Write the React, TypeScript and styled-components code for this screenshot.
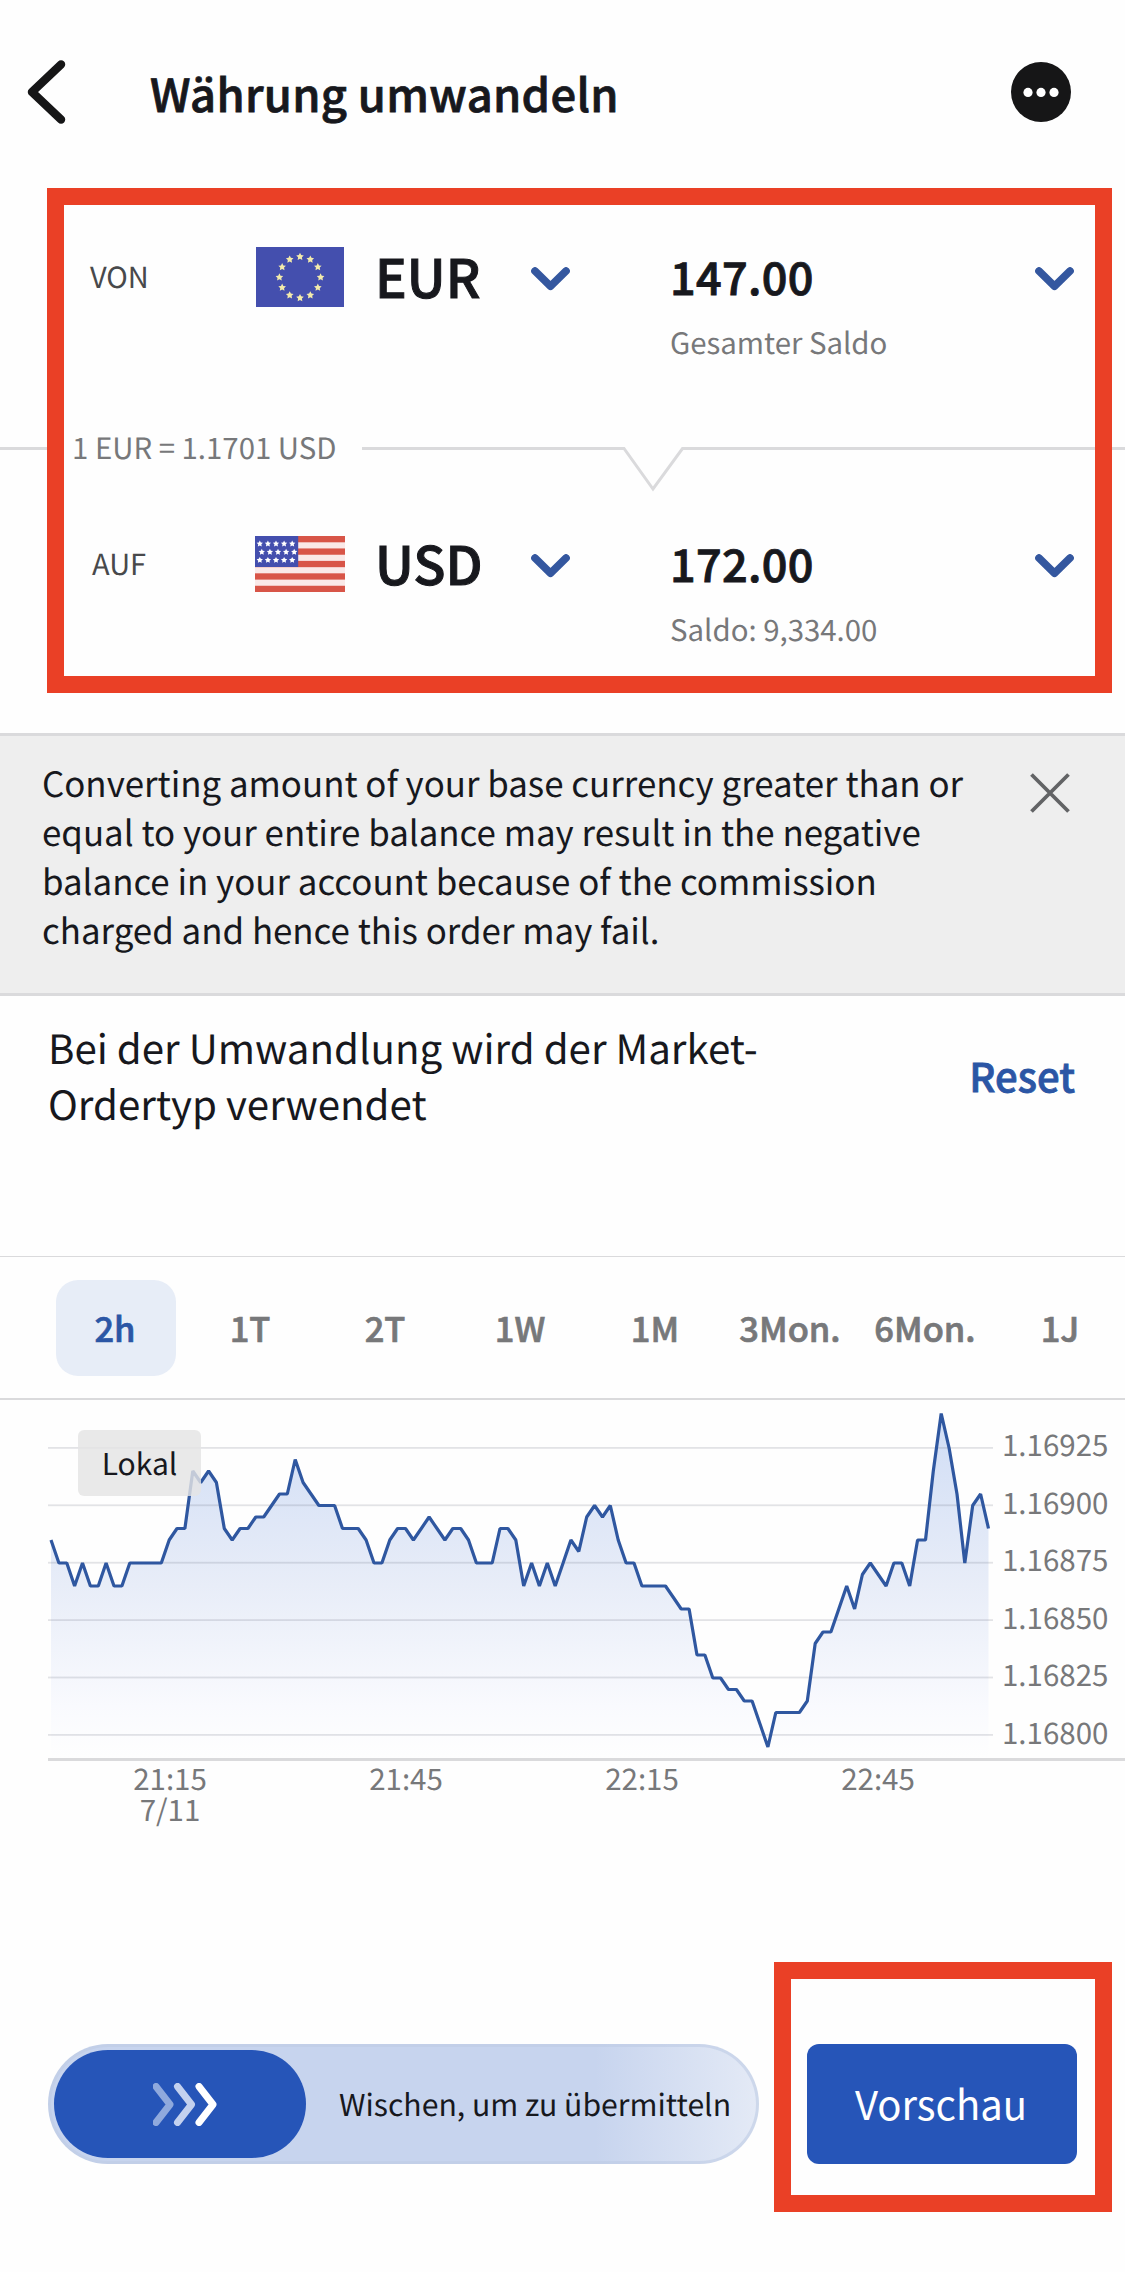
import React from 'react';
import styled, { createGlobalStyle } from 'styled-components';

const ink = '#17181d';
const muted = '#77787a';
const blue = '#2b56a5';
const line = '#dadadc';

const GlobalStyle = createGlobalStyle`
  *, *::before, *::after { box-sizing: border-box; }
  body {
    margin: 0;
    background: #fefefe;
    color: ${ink};
    font-family: "Noto Sans CJK SC", "Noto Sans", sans-serif;
    font-kerning: normal;
    text-rendering: geometricPrecision;
  }
  button { font: inherit; color: inherit; background: none; border: 0; padding: 0; }
  p, h1 { margin: 0; font-weight: 400; }
  svg { display: block; flex: none; }
`;

const Screen = styled.main`
  position: relative;
  width: 1125px;
  height: 2272px;
  overflow: hidden;
  display: flex;
  flex-direction: column;
  white-space: nowrap;
`;

const Header = styled.header`
  height: 187px;
  padding: 0 54px 3px 27px;
  display: flex;
  align-items: center;
`;

const Title = styled.h1`
  flex: 1;
  padding: 2px 0 0 84px;
  font-size: 45.3px;
  line-height: 64px;
  font-weight: 500;
  letter-spacing: 0.33px;
  -webkit-text-stroke: 0.8px currentColor;
`;

const Converter = styled.section`
  height: 546px;
  padding-top: 56px;
`;

const CurrencyRow = styled.div`
  display: grid;
  grid-template-columns: 165px 120px 156px 139px 365px auto;
  padding-left: 90px;
  height: 118px;
`;

const Cell = styled.div<{ $drop?: number }>`
  height: 64px;
  display: flex;
  align-items: center;
  padding-top: ${(p) => (p.$drop ?? 0) * 2}px;
`;

const SideLabel = styled.span<{ $indent: number }>`
  padding-left: ${(p) => p.$indent}px;
  font-size: 29px;
  color: #48494b;
`;

const Code = styled.span`
  font-size: 53px;
  line-height: 64px;
  font-weight: 500;
  -webkit-text-stroke: 1px currentColor;
`;

const Amount = styled.div`
  padding-top: 1px;
  font-size: 45px;
  line-height: 64px;
  font-weight: 500;
  letter-spacing: 0.35px;
  -webkit-text-stroke: 0.9px currentColor;
`;

const Balance = styled.div`
  margin-top: 14px;
  font-size: 29.4px;
  line-height: 40px;
  color: ${muted};
`;

const RateDivider = styled.div`
  height: 169px;
  padding-top: 65px;
  display: flex;
`;

const Stub = styled.div`
  width: 60px;
  height: 3px;
  margin: 21px 12px 0 0;
  background: ${line};
`;

const Rate = styled.div`
  width: 290px;
  padding-top: 1px;
  font-size: 29.4px;
  line-height: 41px;
  color: ${muted};
`;

const Banner = styled.section`
  height: 263px;
  padding: 23px 55px 0 42px;
  display: flex;
  justify-content: space-between;
  background: #eeeeee;
  border-top: 3px solid ${line};
  border-bottom: 3px solid ${line};
`;

const BannerText = styled.p`
  font-size: 34.87px;
  line-height: 49px;
`;

const CloseButton = styled.button`
  width: 40px;
  height: 40px;
  margin-top: 14px;
`;

const OrderInfo = styled.section`
  height: 260px;
  padding: 23px 50px 0 48px;
  display: flex;
  justify-content: space-between;
`;

const InfoText = styled.p`
  font-size: 40.25px;
  line-height: 56px;
`;

const ResetButton = styled.button`
  height: 112px;
  font-size: 40px;
  font-weight: 500;
  color: ${blue};
  -webkit-text-stroke: 0.8px currentColor;
`;

const Tabs = styled.nav`
  height: 144px;
  padding: 23px 0 0 56px;
  display: flex;
  gap: 15px;
  border-top: 1px solid ${line};
  border-bottom: 2px solid ${line};
`;

const Tab = styled.button<{ $active: boolean }>`
  flex: none;
  width: 120px;
  height: 96px;
  border-radius: 22px;
  padding: 0 2px 2px 0;
  display: flex;
  align-items: center;
  justify-content: center;
  font-size: 34.5px;
  font-weight: 500;
  -webkit-text-stroke: 0.7px currentColor;
  color: ${(p) => (p.$active ? blue : muted)};
  background: ${(p) => (p.$active ? '#e7edf7' : 'transparent')};
`;

const Chart = styled.section`
  position: relative;
  margin-left: 48px;
  height: 361px;
  display: flex;
  border-bottom: 3px solid ${line};
`;

const PriceAxis = styled.div`
  padding: 16px 0 0 9px;
  font-size: 29.5px;
  line-height: 57.5px;
  color: ${muted};
`;

const LocalBadge = styled.div`
  position: absolute;
  left: 30px;
  top: 30px;
  width: 123px;
  height: 66px;
  border-radius: 6px;
  padding-bottom: 3px;
  display: flex;
  align-items: center;
  justify-content: center;
  background: rgba(228, 228, 228, 0.82);
  font-size: 30px;
`;

const TimeAxis = styled.div`
  height: 283px;
  padding: 2px 0 0 52px;
  display: flex;
  font-size: 29.5px;
  line-height: 30.5px;
  color: ${muted};
`;

const Tick = styled.div`
  width: 236px;
  text-align: center;
`;

const Actions = styled.footer`
  padding: 0 48px;
  display: flex;
  justify-content: space-between;
`;

const SwipeTrack = styled.div`
  width: 711px;
  height: 120px;
  border: 3px solid rgba(190, 203, 228, 0.6);
  border-radius: 60px;
  padding: 3px;
  display: flex;
  align-items: center;
  background: linear-gradient(90deg, #c7d4ee 0%, #c7d4ee 77%, #e4eaf6 100%) border-box;
`;

const Knob = styled.div`
  flex: none;
  width: 252px;
  height: 108px;
  margin-right: 33px;
  border-radius: 54px;
  display: flex;
  align-items: center;
  justify-content: center;
  padding-left: 11px;
  background: #2655b8;
`;

const SwipeText = styled.span`
  padding-bottom: 2px;
  font-size: 30.2px;
`;

const PreviewButton = styled.button`
  width: 270px;
  height: 120px;
  padding: 0 2px 2px 0;
  border-radius: 12px;
  background: #2655b8;
  color: #fff;
  font-size: 40px;
`;

const Highlight = styled.div<{ $x: number; $y: number; $w: number; $h: number }>`
  position: absolute;
  left: ${(p) => p.$x}px;
  top: ${(p) => p.$y}px;
  width: ${(p) => p.$w}px;
  height: ${(p) => p.$h}px;
  border: 17px solid #ea4026;
  pointer-events: none;
`;

const Caret = () => (
  <svg width="39" height="24" viewBox="0 0 39 24">
    <path d="M4 4 L19.5 19.3 L35 4" fill="none" stroke="#34579f" strokeWidth="7.6" strokeLinecap="round" strokeLinejoin="round" />
  </svg>
);

const starPoints = (cx: number, cy: number, r: number) =>
  Array.from({ length: 10 }, (_, i) => {
    const a = (Math.PI / 5) * i - Math.PI / 2;
    const q = i % 2 ? r * 0.5 : r;
    return `${(cx + q * Math.cos(a)).toFixed(2)},${(cy + q * Math.sin(a)).toFixed(2)}`;
  }).join(' ');

const EuFlag = () => (
  <svg width="89" height="60" viewBox="-1 0 89 60">
    <rect width="88" height="60" fill="#444fae" />
    {Array.from({ length: 12 }, (_, i) => {
      const a = (Math.PI / 6) * i;
      return <polygon key={i} points={starPoints(44 + 20.6 * Math.sin(a), 30.3 - 20.6 * Math.cos(a), 4)} fill="#f3ebab" />;
    })}
  </svg>
);

const UsFlag = () => (
  <svg width="90" height="56" viewBox="0 0 90 56">
    <rect width="90" height="56" fill="#fae9e8" />
    {[0, 1, 2, 3, 4].map((i) => (
      <rect key={i} y={i * 12.44} width="90" height="6.3" fill="#d85548" />
    ))}
    <rect width="43.2" height="31" fill="#444fae" />
    {[0, 1, 2].map((r) =>
      [0, 1, 2, 3, 4].map((c) => (
        <polygon key={`${r}${c}`} points={starPoints(4.8 + c * 8.1 + (r === 1 ? 2 : 0), 7.8 + r * 8.2, 3.3)} fill="#fff" />
      )),
    )}
  </svg>
);

// Steps of 0.00005 below 1.16925, one per minute.
const levels = [
  8, 10, 10, 12, 10, 12, 12, 10, 12, 12, 10, 10, 10, 10, 10, 8, 7, 7, 2, 3, 2, 3, 7, 8, 7, 7, 6, 6, 5, 4, 4, 1, 3, 4, 5, 5, 5, 7, 7, 7,
  8, 10, 10, 8, 7, 7, 8, 7, 6, 7, 8, 7, 7, 8, 10, 10, 10, 7, 7, 8, 12, 10, 12, 10, 12, 10, 8, 9, 6, 5, 6, 5, 8, 10, 10, 12, 12, 12, 12,
  13, 14, 14, 18, 18, 20, 20, 21, 21, 22, 22, 24, 26, 23, 23, 23, 23, 22, 17, 16, 16, 14, 12, 14, 11, 10, 11, 12, 10, 10, 12, 8, 8, 2,
  -3, 0, 4, 10, 5, 4, 7,
];

const PricePlot = () => {
  const pts = levels.map((k, i) => `${(3 + i * 7.878).toFixed(1)},${(48 + k * 11.5).toFixed(1)}`);
  return (
    <svg width="945" height="358" viewBox="0 0 945 358">
      <defs>
        <linearGradient id="fade" gradientUnits="userSpaceOnUse" x1="0" y1="13" x2="0" y2="358">
          <stop offset="0" stopColor="#d0ddf5" />
          <stop offset="0.5" stopColor="#e8edf8" />
          <stop offset="0.85" stopColor="#f9fafe" />
          <stop offset="1" stopColor="#fefefe" />
        </linearGradient>
      </defs>
      <polygon points={`3,358 ${pts.join(' ')} 940.5,358`} fill="url(#fade)" />
      {[0, 1, 2, 3, 4, 5].map((i) => (
        <rect key={i} y={47 + i * 57.4} width="945" height="1.8" fill="#5a6070" fillOpacity="0.17" />
      ))}
      <polyline points={pts.join(' ')} fill="none" stroke="#2f57a0" strokeWidth="3.2" strokeLinejoin="bevel" />
    </svg>
  );
};

const rows = [
  { label: 'VON', indent: 0, flag: <EuFlag />, code: 'EUR', amount: '147.00', balance: 'Gesamter Saldo', drop: 4 },
  { label: 'AUF', indent: 2, flag: <UsFlag />, code: 'USD', amount: '172.00', balance: 'Saldo: 9,334.00', drop: 3.5 },
];

const Row = ({ r }: { r: (typeof rows)[number] }) => (
  <CurrencyRow>
    <Cell $drop={1}><SideLabel $indent={r.indent}>{r.label}</SideLabel></Cell>
    <Cell $drop={2}>{r.flag}</Cell>
    <Cell $drop={1}><Code>{r.code}</Code></Cell>
    <Cell $drop={r.drop}><Caret /></Cell>
    <div>
      <Amount>{r.amount}</Amount>
      <Balance>{r.balance}</Balance>
    </div>
    <Cell $drop={r.drop}><Caret /></Cell>
  </CurrencyRow>
);

const periods = ['2h', '1T', '2T', '1W', '1M', '3Mon.', '6Mon.', '1J'];
const prices = ['1.16925', '1.16900', '1.16875', '1.16850', '1.16825', '1.16800'];

export default function App() {
  return (
    <Screen>
      <GlobalStyle />
      <Header>
        <svg width="39" height="64" viewBox="0 0 39 64">
          <path d="M34 4.5 L5 32 L34 59.5" fill="none" stroke="#161617" strokeWidth="8.5" strokeLinecap="round" strokeLinejoin="round" />
        </svg>
        <Title>Währung umwandeln</Title>
        <svg width="60" height="60" viewBox="0 0 60 60">
          <circle cx="30" cy="30" r="30" fill="#161617" />
          {[17, 30, 43].map((x) => <circle key={x} cx={x} cy="30.4" r="4.6" fill="#fff" />)}
        </svg>
      </Header>

      <Converter>
        <Row r={rows[0]} />
        <RateDivider>
          <Stub />
          <Rate>1 EUR = 1.1701 USD</Rate>
          <svg width="763" height="68" viewBox="0 0 763 68">
            <path d="M0 22.5 H262 L291 63 L320.5 22.5 H763" fill="none" stroke={line} strokeWidth="3" />
          </svg>
        </RateDivider>
        <Row r={rows[1]} />
      </Converter>

      <Banner>
        <BannerText>
          Converting amount of your base currency greater than or<br />
          equal to your entire balance may result in the negative<br />
          balance in your account because of the commission<br />
          charged and hence this order may fail.
        </BannerText>
        <CloseButton>
          <svg width="40" height="40" viewBox="0 0 40 40">
            <path d="M1.5 1.5 L38.5 38.5 M38.5 1.5 L1.5 38.5" stroke="#626365" strokeWidth="3.8" />
          </svg>
        </CloseButton>
      </Banner>

      <OrderInfo>
        <InfoText>Bei der Umwandlung wird der Market-<br />Ordertyp verwendet</InfoText>
        <ResetButton>Reset</ResetButton>
      </OrderInfo>

      <Tabs>
        {periods.map((p, i) => <Tab key={p} $active={i === 0}>{p}</Tab>)}
      </Tabs>

      <Chart>
        <PricePlot />
        <PriceAxis>{prices.map((p) => <div key={p}>{p}</div>)}</PriceAxis>
        <LocalBadge>Lokal</LocalBadge>
      </Chart>
      <TimeAxis>
        <Tick>21:15<br />7/11</Tick>
        <Tick>21:45</Tick>
        <Tick>22:15</Tick>
        <Tick>22:45</Tick>
      </TimeAxis>

      <Actions>
        <SwipeTrack>
          <Knob>
            <svg width="65" height="43" viewBox="0 0 65 43">
              {[0, 21.5, 43].map((x, i) => (
                <path
                  key={x}
                  d={`M${x + 3} 3.5 L${x + 17} 21.5 L${x + 3} 39.5`}
                  fill="none"
                  stroke={['#8fa9dd', '#c3d1ef', '#ffffff'][i]}
                  strokeWidth="7"
                  strokeLinecap="round"
                  strokeLinejoin="round"
                />
              ))}
            </svg>
          </Knob>
          <SwipeText>Wischen, um zu übermitteln</SwipeText>
        </SwipeTrack>
        <PreviewButton>Vorschau</PreviewButton>
      </Actions>

      <Highlight $x={47} $y={187.5} $w={1065} $h={505} />
      <Highlight $x={774} $y={1962} $w={338} $h={250} />
    </Screen>
  );
}
